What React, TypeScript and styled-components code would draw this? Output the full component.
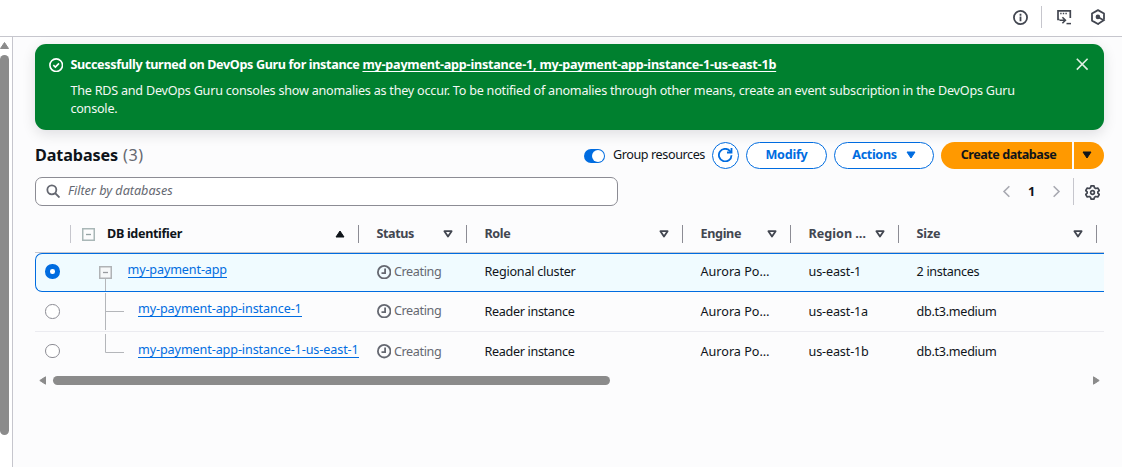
import React from 'react';
import styled, { createGlobalStyle, css } from 'styled-components';

const color = {
  text: '#0f141a',
  heading: '#424650',
  muted: '#656871',
  link: '#006ce0',
  green: '#00802f',
  orange: '#ff9900',
  divider: '#c6c6cd',
  control: '#8c8c94',
  scroll: '#8b8b8b',
  page: '#fcfcfd',
};

const GlobalStyle = createGlobalStyle`
  *, *::before, *::after { box-sizing: border-box; }
  body {
    margin: 0;
    overflow: hidden;
    background: ${color.page};
    color: ${color.text};
    font-family: 'Noto Sans', 'Open Sans', sans-serif;
    font-size: 12.6px;
    line-height: 18px;
  }
  svg { display: block; flex: none; }
`;

const Page = styled.div`
  display: flex;
  flex-direction: column;
  height: 467px;
`;

const TopBar = styled.header`
  display: flex;
  align-items: center;
  justify-content: flex-end;
  height: 37px;
  flex: none;
  padding: 0 16px 2px 0;
  background: #fff;
  border-bottom: 1px solid ${color.divider};
  color: ${color.heading};
`;

const TopDivider = styled.span`
  width: 1px;
  height: 22px;
  margin: 0 14px 0 13px;
  background: ${color.divider};
`;

const Body = styled.div`
  display: flex;
  flex: 1;
  min-height: 0;
`;

const ScrollRail = styled.aside`
  display: flex;
  flex-direction: column;
  width: 13px;
  flex: none;
  padding-top: 5px;
  background: #fff;
  border-right: 1px solid ${color.divider};
`;

const RailThumb = styled.div`
  width: 9px;
  height: 380px;
  margin-top: 6px;
  border-radius: 4.5px;
  background: ${color.scroll};
`;

const Main = styled.main`
  flex: 1;
  min-width: 0;
  padding: 7px 18px 0 22px;
`;

const Flash = styled.section`
  display: flex;
  align-items: flex-start;
  height: 86px;
  padding: 11.5px 15px 0 14px;
  border-radius: 11px;
  background: ${color.green};
  color: #fff;
  box-shadow: 0 4px 14px rgba(0, 7, 22, 0.12);
`;

const FlashIcon = styled.span`
  padding-top: 2.5px;
`;

const FlashContent = styled.div`
  flex: 1;
  padding-left: 7px;
`;

const FlashTitle = styled.div`
  font-weight: 700;
  white-space: pre;
`;

const FlashLink = styled.a`
  text-decoration: underline;
  text-decoration-thickness: 1px;
  text-underline-offset: 2px;
  text-decoration-skip-ink: none;
`;

const FlashText = styled.p`
  width: 960px;
  margin: 8px 0 0;
  letter-spacing: -0.226px;
  color: #f3f8f4;
`;

const CloseButton = styled.span`
  padding-top: 1.5px;
  color: #dfeee3;
`;

const Text = styled.span<{ $track?: number }>`
  letter-spacing: ${(p) => p.$track ?? 0}px;
`;

const HeaderRow = styled.div`
  display: flex;
  align-items: center;
  height: 27px;
  margin-top: 12px;
`;

const Title = styled.h1`
  flex: 1;
  margin: 0;
  padding-bottom: 2px;
  font-size: 16.2px;
  line-height: 24px;
  font-weight: 700;
  letter-spacing: -0.12px;
`;

const Counter = styled.span`
  margin-left: 5px;
  font-weight: 400;
  letter-spacing: 0.5px;
  color: ${color.muted};
`;

const Toggle = styled.span`
  display: flex;
  justify-content: flex-end;
  width: 21px;
  height: 14px;
  padding: 1px;
  margin-right: 8px;
  border-radius: 7px;
  background: ${color.link};
`;

const ToggleLabel = styled.span`
  padding-bottom: 2px;
  letter-spacing: -0.41px;
`;

const ToggleKnob = styled.span`
  width: 12px;
  height: 12px;
  border-radius: 50%;
  background: #fff;
`;

const Button = styled.button<{ $width: number }>`
  display: flex;
  align-items: center;
  justify-content: center;
  gap: 9px;
  width: ${(p) => p.$width}px;
  height: 27px;
  margin-left: 7px;
  padding: 0 0 1px;
  border: 1.5px solid ${color.link};
  border-radius: 14px;
  background: #fff;
  color: ${color.link};
  font: inherit;
  font-weight: 700;
`;

const primary = css`
  border: 0;
  background: ${color.orange};
  color: ${color.text};
`;

const PrimaryButton = styled(Button)`
  ${primary}
  padding-left: 4px;
  border-radius: 14px 0 0 14px;
`;

const PrimaryMenuButton = styled(Button)`
  ${primary}
  margin-left: 2px;
  border-radius: 0 14px 14px 0;
  padding-right: 5px;
`;

const FilterRow = styled.div`
  display: flex;
  align-items: center;
  height: 29px;
  margin-top: 8px;
`;

const SearchBox = styled.div`
  display: flex;
  align-items: center;
  gap: 8px;
  width: 583px;
  height: 29px;
  padding: 0 0 1px 9.5px;
  border: 1px solid ${color.control};
  border-radius: 7px;
  background: #fff;
  color: ${color.muted};
  font-style: italic;
`;

const Pager = styled.div`
  display: flex;
  align-items: center;
  margin-left: auto;
  color: #a8a9b1;
`;

const PageNumber = styled.span`
  width: 37px;
  text-align: center;
  color: ${color.text};
  font-weight: 700;
`;

const PagerDivider = styled.span`
  width: 1px;
  height: 27px;
  margin: 0 11px 0 10px;
  background: ${color.divider};
`;

const Gear = styled.span`
  padding: 1px 4px 0 0;
  color: ${color.heading};
`;

const Table = styled.div`
  margin-top: 10px;
`;

const columns = css`
  display: grid;
  grid-template-columns: 36px 288px 108px 216px 108px 108px 205px;
`;

const TableHead = styled.div`
  ${columns}
  height: 37px;
  border-bottom: 1px solid ${color.divider};
`;

const HeadCell = styled.div<{ $strong?: boolean; $pad?: number; $dark?: boolean; $end?: number }>`
  display: flex;
  align-items: center;
  height: 36px;
  padding: 0 0 0 ${(p) => p.$pad ?? 17.5}px;
  margin-right: ${(p) => p.$end ?? 0}px;
  color: ${(p) => (p.$strong ? color.text : color.heading)};
  font-weight: 700;

  &::after {
    content: '';
    width: 1px;
    height: 18px;
    background: ${(p) => (p.$dark ? color.control : color.divider)};
  }
`;

const HeadLabel = styled.span<{ $track: number }>`
  flex: 1;
  letter-spacing: ${(p) => p.$track}px;
  white-space: nowrap;
`;

const SortSlot = styled.span`
  padding-right: 13px;
`;

const ExpandSlot = styled.span`
  padding-right: 12px;
`;

const TableRow = styled.div<{ $selected?: boolean; $last?: boolean }>`
  ${columns}
  height: 40px;
  border-bottom: ${(p) => (p.$last ? '0' : '1px solid #ebebf0')};
  ${(p) =>
    p.$selected &&
    css`
      height: 39px;
      border: 1px solid ${color.link};
      border-right: 0;
      border-radius: 7px 0 0 7px;
      background: #f0fbff;
      grid-template-columns: 35px 288px 108px 216px 108px 108px 205px;
    `}
`;

const Cell = styled.div<{ $lift?: number }>`
  display: flex;
  align-items: center;
  min-width: 0;
  padding: 0 0 ${(p) => p.$lift ?? 0}px 17.5px;
  white-space: nowrap;
`;

const RadioCell = styled(Cell)<{ $inset: number }>`
  padding-left: ${(p) => p.$inset}px;
`;

const NameCell = styled.div`
  display: flex;
  min-width: 0;
  overflow: hidden;
`;

const Radio = styled.span<{ $checked?: boolean }>`
  width: 14.500px;
  height: 14.500px;
  border: ${(p) => (p.$checked ? `5px solid ${color.link}` : `1px solid ${color.control}`)};
  border-radius: 50%;
  background: #fff;
`;

const NameLink = styled.a<{ $top: number; $gap: number; $track: number }>`
  height: 16px;
  margin-top: ${(p) => p.$top}px;
  margin-left: ${(p) => p.$gap}px;
  line-height: 15px;
  border-bottom: 1px solid ${color.link};
  letter-spacing: ${(p) => p.$track}px;
  white-space: nowrap;
  color: ${color.link};
`;

const StatusCell = styled(Cell)`
  gap: 3px;
  color: ${color.muted};
`;

const HScroll = styled.div`
  display: flex;
  align-items: center;
  height: 9px;
  margin-top: 4px;
  padding: 0 4px;
`;

const HThumb = styled.div`
  width: 557px;
  height: 9px;
  margin: 0 auto 0 6px;
  border-radius: 4.5px;
  background: ${color.scroll};
`;

type IconProps = { size?: number; width?: number; children: React.ReactNode };
const Icon = ({ size = 14.4, width = 2, children }: IconProps) => (
  <svg width={size} height={size} viewBox="0 0 16 16" fill="none" stroke="currentColor" strokeWidth={width}>
    {children}
  </svg>
);

const Caret = () => (
  <svg width="10" height="8" viewBox="0 0 10 8">
    <path d="M1 1h8L5 7z" fill="currentColor" stroke="currentColor" strokeLinejoin="round" />
  </svg>
);

const SortDown = () => (
  <svg width="10" height="8" viewBox="0 0 10 8">
    <path d="M1.4 1.2h7.2L5 6.6z" fill="none" stroke="currentColor" strokeWidth="1.8" strokeLinejoin="round" />
  </svg>
);

const SortUp = () => (
  <svg width="10" height="8" viewBox="0 0 10 8">
    <path d="M1 7h8L5 1z" fill="currentColor" stroke="currentColor" strokeLinejoin="round" />
  </svg>
);

const Collapse = () => (
  <svg width="13" height="13" viewBox="0 0 13 13">
    <rect x="0.75" y="0.75" width="11.5" height="11.5" fill="none" stroke="#a9b7b7" strokeWidth="1.5" />
    <path d="M4 6.5h5" stroke="#94a3a3" strokeWidth="1.3" />
  </svg>
);

const Pending = () => (
  <Icon>
    <circle cx="8" cy="8" r="7" />
    <path d="M9 4v5H5" />
  </Icon>
);

const RootBranch = () => (
  <svg width="70" height="37" viewBox="0 0 70 37">
    <rect x="28.75" y="12.75" width="11.500" height="11.500" fill="#f6f8f9" stroke="#b0b3b6" strokeWidth="1.5" />
    <path d="M32 18.500h5" stroke="#989b9f" strokeWidth="1.3" />
    <path d="M34.500 25V37" stroke="#b4b6ba" />
  </svg>
);

const ChildBranch = ({ last }: { last?: boolean }) => (
  <svg width="54" height="39" viewBox="0 0 54 39" fill="none" stroke="#b4b6ba">
    {last ? <path d="M34.5 2v18.5H53" /> : <path d="M34.5 1v37M34.5 19.5H53" />}
  </svg>
);

const headings = [
  { label: 'Status', track: -0.4 },
  { label: 'Role', track: -0.4 },
  { label: 'Engine', track: -0.35 },
  { label: 'Region …', track: 0 },
  { label: 'Size', track: -0.15, end: 7 },
];

const rows = [
  {
    name: 'my-payment-app', nameTop: 8, nameGap: -13.5, nameTrack: -0.13, lift: 1,
    role: 'Regional cluster', roleTrack: -0.24, region: 'us-east-1', size: '2 instances', sizeTrack: -0.3,
  },
  {
    name: 'my-payment-app-instance-1', nameTop: 9, nameGap: 13, nameTrack: -0.1, lift: 1,
    role: 'Reader instance', roleTrack: -0.33, region: 'us-east-1a', size: 'db.t3.medium', sizeTrack: -0.28,
  },
  {
    name: 'my-payment-app-instance-1-us-east-1', nameTop: 10, nameGap: 13, nameTrack: -0.1, lift: 1,
    role: 'Reader instance', roleTrack: -0.33, region: 'us-east-1b', size: 'db.t3.medium', sizeTrack: -0.28,
  },
];

export default function App() {
  return (
    <Page>
      <GlobalStyle />
      <TopBar>
        <Icon size={15} width={1.9}>
          <circle cx="8" cy="8" r="7" />
          <path d="M8 7v5M8 4v2" />
        </Icon>
        <TopDivider />
        <svg width="16" height="16" viewBox="0 0 16 16" fill="none" stroke="currentColor">
          <path d="M3.5 10.5H2V1.8h12.3V9" strokeWidth="1.7" />
          <path d="M4.2 4.4h1.4M6.8 4.4h1.4M9.4 4.4h1.4" strokeWidth="1.5" />
          <path d="M3.5 11.2H9M6.4 8.2l3 3-3 3" strokeWidth="1.6" />
          <path d="M10.5 14.6H15" strokeWidth="1.5" />
        </svg>
        <svg width="34" height="16" viewBox="-18 0 34 16" fill="none" stroke="currentColor">
          <path d="M8.5 14.6 8 15 2 11.6V4.5L8 1.1l6 3.4v6.3" strokeWidth="1.8" strokeLinejoin="round" />
          <circle cx="7.9" cy="7.9" r="2.3" fill="currentColor" stroke="none" />
          <path d="m8 8 5.7 3.3L8 15" strokeWidth="1.7" />
        </svg>
      </TopBar>
      <Body>
        <ScrollRail>
          <svg width="9" height="7" viewBox="0 0 9 7">
            <path d="M4.5 0.5 8.5 6.5h-8z" fill={color.scroll} stroke={color.scroll} strokeLinejoin="round" />
          </svg>
          <RailThumb />
        </ScrollRail>
        <Main>
          <Flash>
            <FlashIcon>
              <Icon width={1.8}>
                <circle cx="8" cy="8" r="7" />
                <path d="m4.8 8 2.3 2.2 4-4.2" />
              </Icon>
            </FlashIcon>
            <FlashContent>
              <FlashTitle>
                <Text $track={-0.35}>Successfully turned on DevOps Guru for instance </Text>
                <FlashLink>
                  <Text $track={-0.215}>my-payment-app-instance-1, my-payment-app-instance-1-us-east-1b</Text>
                </FlashLink>
              </FlashTitle>
              <FlashText>
                The RDS and DevOps Guru consoles show anomalies as they occur. To be notified of anomalies through other
                means, create an event subscription in the DevOps Guru console.
              </FlashText>
            </FlashContent>
            <CloseButton>
              <Icon width={1.8}>
                <path d="m2 2 12 12M14 2 2 14" />
              </Icon>
            </CloseButton>
          </Flash>

          <HeaderRow>
            <Title>
              Databases<Counter>(3)</Counter>
            </Title>
            <Toggle>
              <ToggleKnob />
            </Toggle>
            <ToggleLabel>Group resources</ToggleLabel>
            <Button $width={27} aria-label="Refresh">
              <Icon size={14.4}>
                <path d="M10 5h5V0" />
                <path d="M15 8a7 7 0 1 1-1.5-4.4L15 5" />
              </Icon>
            </Button>
            <Button $width={81}>
              <Text $track={-0.25}>Modify</Text>
            </Button>
            <Button $width={100}>
              <Text $track={-0.35}>Actions</Text>
              <Caret />
            </Button>
            <PrimaryButton $width={131}>
              <Text $track={-0.47}>Create database</Text>
            </PrimaryButton>
            <PrimaryMenuButton $width={30} aria-label="More create options">
              <Caret />
            </PrimaryMenuButton>
          </HeaderRow>

          <FilterRow>
            <SearchBox>
              <Icon size={14.4}>
                <circle cx="6.5" cy="6.5" r="5" />
                <path d="m15 15-5-5" />
              </Icon>
              <span>Filter by databases</span>
            </SearchBox>
            <Pager>
              <Icon size={13}>
                <path d="M11.5 1.5 5 8l6.5 6.5" />
              </Icon>
              <PageNumber>1</PageNumber>
              <Icon size={13}>
                <path d="M4.5 1.5 11 8l-6.5 6.5" />
              </Icon>
              <PagerDivider />
              <Gear>
                <Icon size={15} width={1.8}>
                  <path
                    d="M6.4 1h3.2l.5 2 1.5.8 2-.6 1.6 2.7L13.7 7.3v1.4l1.5 1.4-1.6 2.7-2-.6-1.5.8-.5 2H6.4l-.5-2-1.500-.8-2 .6L.8 10.100l1.500-1.400V7.300L.8 5.900l1.600-2.700 2 .6L5.900 3z"
                    strokeLinejoin="round"
                  />
                  <circle cx="8" cy="8" r="2" />
                </Icon>
              </Gear>
            </Pager>
          </FilterRow>

          <Table>
            <TableHead>
              <HeadCell $pad={35} />
              <HeadCell $strong $dark $pad={11}>
                <ExpandSlot>
                  <Collapse />
                </ExpandSlot>
                <HeadLabel $track={-0.33}>DB identifier</HeadLabel>
                <SortSlot>
                  <SortUp />
                </SortSlot>
              </HeadCell>
              {headings.map((h) => (
                <HeadCell key={h.label} $dark $end={h.end}>
                  <HeadLabel $track={h.track}>{h.label}</HeadLabel>
                  <SortSlot>
                    <SortDown />
                  </SortSlot>
                </HeadCell>
              ))}
            </TableHead>
            {rows.map((row, i) => (
              <TableRow key={row.name} $selected={i === 0} $last={i === 2}>
                <RadioCell $inset={i === 0 ? 9 : 10} $lift={i === 1 ? 0 : 2}>
                  <Radio $checked={i === 0} />
                </RadioCell>
                <NameCell>
                  {i === 0 ? <RootBranch /> : <ChildBranch last={i === 2} />}
                  <NameLink $top={row.nameTop} $gap={row.nameGap} $track={row.nameTrack}>
                    {row.name}
                  </NameLink>
                </NameCell>
                <StatusCell $lift={row.lift}>
                  <Pending />
                  <Text $track={-0.36}>Creating</Text>
                </StatusCell>
                <Cell $lift={i === 0 ? 1 : 0}>
                  <Text $track={row.roleTrack}>{row.role}</Text>
                </Cell>
                <Cell $lift={i === 0 ? 1 : 0}>
                  <Text $track={0}>Aurora Po…</Text>
                </Cell>
                <Cell $lift={i === 0 ? 1 : 0}>
                  <Text $track={-0.14}>{row.region}</Text>
                </Cell>
                <Cell $lift={i === 0 ? 1 : 0}>
                  <Text $track={row.sizeTrack}>{row.size}</Text>
                </Cell>
              </TableRow>
            ))}
          </Table>

          <HScroll>
            <svg width="8" height="9" viewBox="0 0 8 9">
              <path d="M0.8 4.5 6.5 0.8v7.4z" fill={color.scroll} stroke={color.scroll} strokeLinejoin="round" />
            </svg>
            <HThumb />
            <svg width="8" height="9" viewBox="0 0 8 9">
              <path d="M7.2 4.5 1.5 0.8v7.4z" fill={color.scroll} stroke={color.scroll} strokeLinejoin="round" />
            </svg>
          </HScroll>
        </Main>
      </Body>
    </Page>
  );
}
